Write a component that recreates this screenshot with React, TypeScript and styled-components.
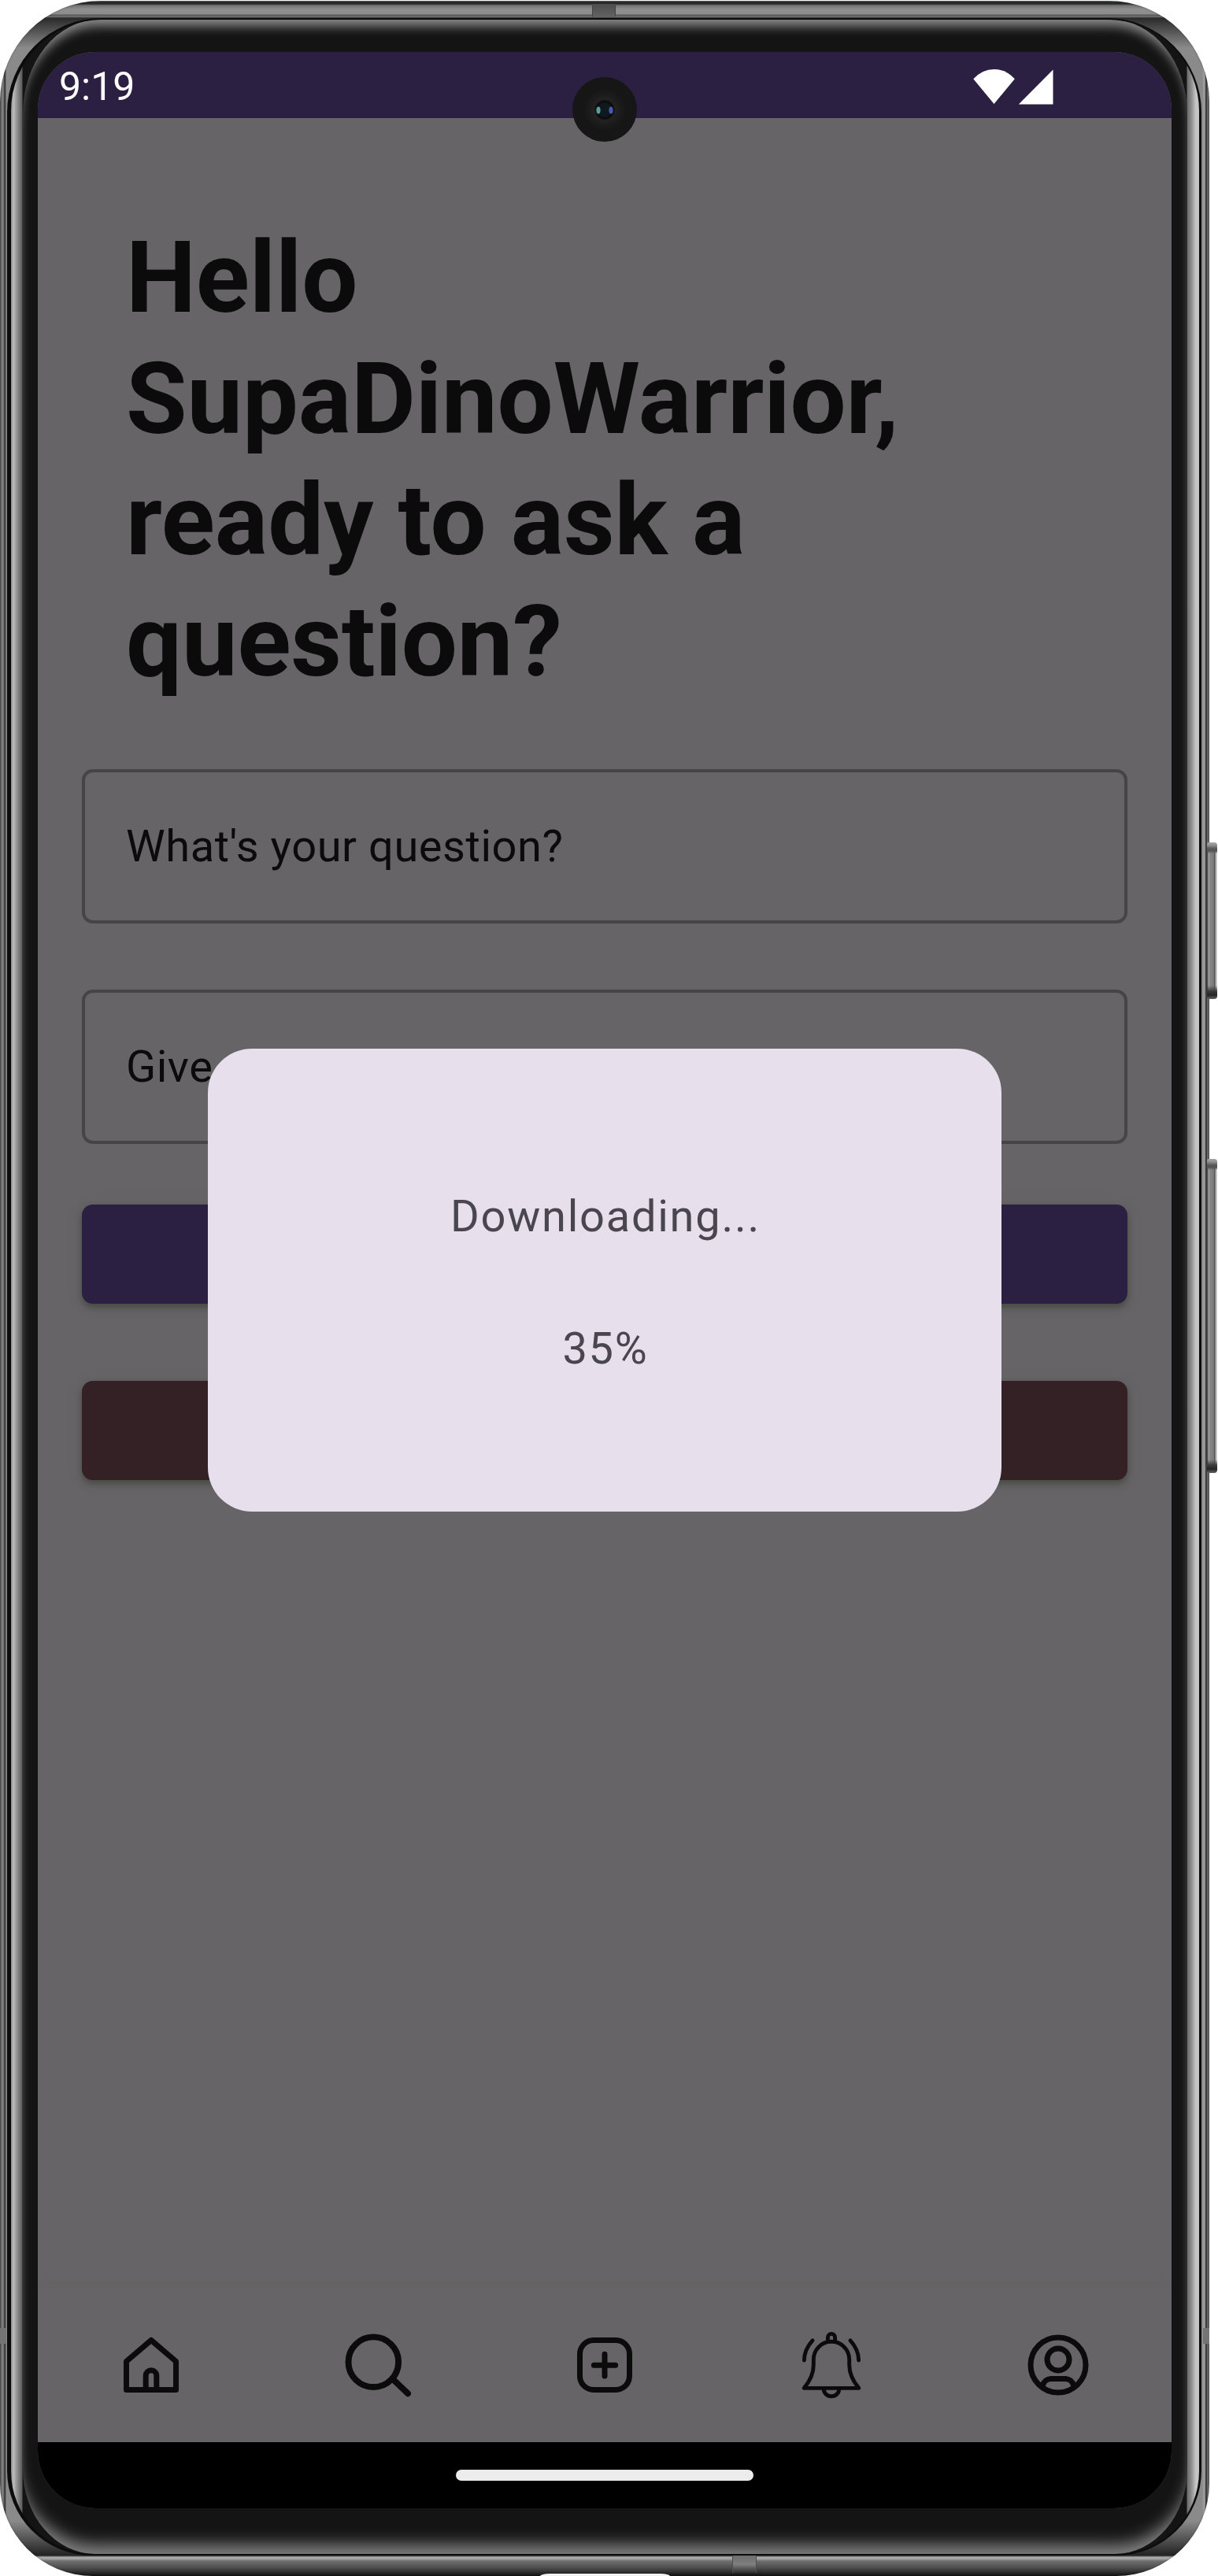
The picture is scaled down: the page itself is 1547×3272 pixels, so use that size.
import React from "react";
import styled, { createGlobalStyle } from "styled-components";

const GlobalStyle = createGlobalStyle`
  * { box-sizing: border-box; }
  body {
    margin: 0;
    background: #ffffff;
    font-family: Roboto, "Liberation Sans", sans-serif;
  }
`;

const Stage = styled.main`
  position: relative;
  width: 1547px;
  height: 3272px;
  padding-top: 1px;
  overflow: hidden;
`;

/* Metal rim */
const Rim = styled.div`
  position: relative;
  width: 1536px;
  height: 3271px;
  padding: 22px 10px 26px 9px;
  border-radius: 128px 128px 118px 118px;
  background:
    linear-gradient(to bottom, #6a706c 0, #222423 2px, #2c2c2c 4px, #747474 6px, #8f8f8f 11px, #8c8c8c 17px, #505050 18px, #777777 20px, #2a2a2a 22px, transparent 60px) top / 100% 60px no-repeat,
    linear-gradient(to top, #0e0e0e 0, #1c1c1c 2px, #4c4c4c 10px, #6e6e6e 19px, #a6a6a6 22px, #aaaaaa 24px, #222222 26px, transparent 70px) bottom / 100% 70px no-repeat,
    linear-gradient(to right, #4e4e4e 0, #858585 3px, #6b6b6b 5px, #202020 6px, #8a8a8a 8px, #8a8a8a 1527px, #a5a5a5 1530px, #262626 1532px, #777777 1534px, #4e4e4e 1536px);
  box-shadow: inset 0 0 2px rgba(20, 20, 20, 0.6);
`;

const Groove = styled.div`
  height: 100%;
  padding: 2px 3px 2px 5px;
  border-radius: 120px 120px 108px 108px;
  background: #0c0c0c;
`;

const Edge = styled.div`
  height: 100%;
  padding: 0 15px;
  border-radius: 116px 116px 105px 105px;
  overflow: hidden;
  background: linear-gradient(
    to right,
    #8a8a8a 0,
    #bdbdbd 3px,
    #969696 7px,
    #5c5c5c 14px,
    #141414 15px,
    #141414 1493px,
    #6c6c6c 1494px,
    #8c8c8c 1499px,
    #c6c6c6 1505px,
    #c4c4c4 1509px
  );
`;

const Glass = styled.div`
  height: 100%;
  padding: 41px 19px 57px;
  border-radius: 96px 96px 92px 92px / 120px 120px 108px 108px;
  background: #141414;
  box-shadow:
    inset 0 15px 14px -7px #8c8c8c,
    inset 0 -22px 20px -10px #828282;
`;

const Screen = styled.div`
  position: relative;
  display: flex;
  flex-direction: column;
  width: 1440px;
  height: 3120px;
  border-radius: 73px;
  overflow: hidden;
  background: #676468;
`;

const StatusBar = styled.header`
  display: flex;
  align-items: center;
  justify-content: space-between;
  flex: none;
  height: 84px;
  padding: 3px 150px 0 27px;
  background: #2b2041;
  color: #ffffff;
  font-size: 50px;
  line-height: 58px;
`;

const StatusIcons = styled.svg`
  display: block;
  width: 102px;
  height: 46px;
`;

const Content = styled.section`
  display: flex;
  flex-direction: column;
  flex: 1;
  padding: 126px 56px 0;
`;

const Heading = styled.h1`
  margin: 0 56px 85px;
  color: #0b0b0b;
  font-size: 126px;
  font-weight: 700;
  line-height: 154px;
  letter-spacing: -0.1px;
`;

const Field = styled.div<{ $gap: number }>`
  display: flex;
  align-items: center;
  height: 196px;
  margin-bottom: ${(p) => p.$gap}px;
  padding: 0 52px;
  border: 4px solid #464447;
  border-radius: 14px;
  color: #0b0b0b;
  font-size: 56px;
  line-height: 84px;
  letter-spacing: 0.55px;
`;

const ActionButton = styled.button<{ $color: string }>`
  height: 126px;
  margin: 0 0 98px;
  padding: 0;
  border: 0;
  border-radius: 14px;
  background: ${(p) => p.$color};
  box-shadow:
    0 5px 9px rgba(45, 52, 42, 0.5),
    0 1px 16px rgba(85, 95, 75, 0.35);
`;

const TabBar = styled.nav`
  display: grid;
  grid-template-columns: repeat(5, 1fr);
  place-items: center;
  flex: none;
  height: 196px;
  background: #676468;
  box-shadow: 0 -2px 14px rgba(92, 100, 80, 0.4);
`;

const TabIcon = styled.svg`
  display: block;
  width: 84px;
  height: 84px;
  overflow: visible;
  fill: none;
  stroke: #0b0b0b;
  stroke-linecap: round;
  stroke-linejoin: round;
`;

const GestureBar = styled.footer`
  display: flex;
  align-items: center;
  justify-content: center;
  flex: none;
  height: 84px;
  background: #000000;
`;

const GestureHandle = styled.span`
  width: 378px;
  height: 14px;
  border-radius: 7px;
  background: #ececec;
`;

const DialogLayer = styled.div`
  position: absolute;
  inset: 0;
  display: flex;
  align-items: center;
  justify-content: center;
`;

const Dialog = styled.div`
  display: flex;
  flex-direction: column;
  align-items: center;
  justify-content: center;
  gap: 84px;
  width: 1008px;
  height: 588px;
  padding: 6px 0 0 2px;
  border-radius: 56px;
  background: #e7dfec;
  color: #4a4650;
  font-size: 56px;
  line-height: 84px;
  letter-spacing: 1.75px;
`;

const DialogText = styled.p`
  margin: 0;
`;

const Camera = styled.svg`
  position: absolute;
  left: 727px;
  top: 98px;
  width: 82px;
  height: 82px;
`;

const SideKey = styled.span<{ $top: number; $height: number }>`
  position: absolute;
  left: 1533px;
  top: ${(p) => p.$top}px;
  width: 13px;
  height: ${(p) => p.$height}px;
  border-radius: 2px 4px 4px 2px;
  background:
    linear-gradient(to bottom, #a8a8a8 0, #8c8c8c 4px, #555555 8px, #555555 11px, transparent 14px) top / 100% 14px no-repeat,
    linear-gradient(to top, #666666 0, #242424 5px, #3a3a3a 10px, transparent 17px) bottom / 100% 17px no-repeat,
    linear-gradient(to right, #333333 0, #a0a0a0 2px, #858585 4px, #777777 9px, #3c3c3c 10px, #b8b8b8 11px, #d2d2d2 13px);
`;

const TopSeam = styled.span`
  position: absolute;
  left: 752px;
  top: 5px;
  width: 30px;
  height: 16px;
  border: solid #454545;
  border-width: 0 1px;
  background: linear-gradient(#4d4d4d, #626262);
`;

const BottomSeam = styled.span`
  position: absolute;
  left: 930px;
  top: 3246px;
  width: 31px;
  height: 22px;
  border: solid #4f4f4f;
  border-width: 0 1px;
  background: linear-gradient(#6c6c6c, #808080 50%, #303030);
`;

const SideSeam = styled.span<{ $left: number; $top: number }>`
  position: absolute;
  left: ${(p) => p.$left}px;
  top: ${(p) => p.$top}px;
  width: 8px;
  height: 20px;
  background: #747474;
`;

const Port = styled.span`
  position: absolute;
  left: 686px;
  top: 3269px;
  width: 165px;
  height: 3px;
  border-radius: 12px 12px 0 0 / 3px 3px 0 0;
  background: #f4f4f4;
`;

const HomeIcon = () => (
  <TabIcon viewBox="0 0 24 24" strokeWidth={2}>
    <path d="M3 10.66 12 3l9 7.66V21H3z" />
    <path d="M10.05 21v-5.1a1.95 1.95 0 0 1 3.9 0V21" />
  </TabIcon>
);

const SearchIcon = () => (
  <TabIcon viewBox="0 0 84 84" strokeWidth={7.9}>
    <circle cx="36.3" cy="38.2" r="31.8" />
    <path d="M60.5 59.5 80 78.2" />
  </TabIcon>
);

const AddIcon = () => (
  <TabIcon viewBox="0 0 24 24" strokeWidth={2}>
    <rect x="3" y="3" width="18" height="18" rx="5" />
    <path d="M12 8.1v7.9M8.1 12.05h7.8" />
  </TabIcon>
);

const BellIcon = () => (
  <TabIcon viewBox="0 0 84 84" strokeWidth={4.9}>
    <path d="M7.2 71.4C14.5 62.5 19.3 54 19.3 42V35a22.7 22.7 0 0 1 45.4 0v7c0 12 4.8 20.5 12.1 29.4z" />
    <path d="M37.4 12V7a4.6 4.6 0 0 1 9.2 0v5" />
    <path d="M32.3 73a9.7 8.7 0 0 0 19.4 0" />
    <path d="M18 10.9C11.5 18 7.5 26 7.4 36M66 10.9C72.5 18 76.5 26 76.6 36" />
  </TabIcon>
);

const ProfileIcon = () => (
  <TabIcon viewBox="0 0 24 24" strokeWidth={2}>
    <circle cx="12" cy="12" r="10" />
    <circle cx="12" cy="10" r="4" />
    <path d="M6.4 19.4A3.2 3.2 0 0 1 9.3 17h5.4a3.2 3.2 0 0 1 2.9 2.4" />
  </TabIcon>
);

export default function App() {
  return (
    <>
      <GlobalStyle />
      <Stage>
        <Rim>
          <Groove>
            <Edge>
              <Glass>
                <Screen>
                  <StatusBar>
                    <span>9:19</span>
                    <StatusIcons viewBox="0 0 102 46" fill="#ffffff">
                      <path d="M.3 13.3Q11.5 1 26.5 1T52.8 13.3L26.5 45z" />
                      <path d="M101.5 1.5V45.5H57.8z" />
                    </StatusIcons>
                  </StatusBar>
                  <Content>
                    <Heading>Hello SupaDinoWarrior, ready to ask a question?</Heading>
                    <Field $gap={84}>What's your question?</Field>
                    <Field $gap={77}>Give</Field>
                    <ActionButton $color="#2b2041" />
                    <ActionButton $color="#332126" />
                  </Content>
                  <TabBar>
                    <HomeIcon />
                    <SearchIcon />
                    <AddIcon />
                    <BellIcon />
                    <ProfileIcon />
                  </TabBar>
                  <GestureBar>
                    <GestureHandle />
                  </GestureBar>
                  <DialogLayer>
                    <Dialog>
                      <DialogText>Downloading...</DialogText>
                      <DialogText>35%</DialogText>
                    </Dialog>
                  </DialogLayer>
                </Screen>
              </Glass>
            </Edge>
          </Groove>
        </Rim>
        <TopSeam />
        <BottomSeam />
        <SideSeam $left={0} $top={2957} />
        <SideSeam $left={1528} $top={2957} />
        <Port />
        <SideKey $top={1070} $height={199} />
        <SideKey $top={1472} $height={399} />
        <Camera viewBox="0 0 82 82">
          <defs>
            <radialGradient id="lens">
              <stop offset="0" stopColor="#0d1a20" />
              <stop offset="0.3" stopColor="#10181c" />
              <stop offset="0.4" stopColor="#0a0a0a" />
              <stop offset="0.5" stopColor="#222222" />
              <stop offset="0.7" stopColor="#1c1c1c" />
              <stop offset="1" stopColor="#161616" />
            </radialGradient>
          </defs>
          <circle cx="41" cy="41" r="41" fill="#161616" />
          <circle cx="41" cy="41.5" r="27" fill="url(#lens)" />
          <ellipse cx="33" cy="42" rx="2.6" ry="4.5" fill="#5f9a9c" />
          <ellipse cx="49" cy="42" rx="2.6" ry="4.5" fill="#465bb0" />
        </Camera>
      </Stage>
    </>
  );
}
